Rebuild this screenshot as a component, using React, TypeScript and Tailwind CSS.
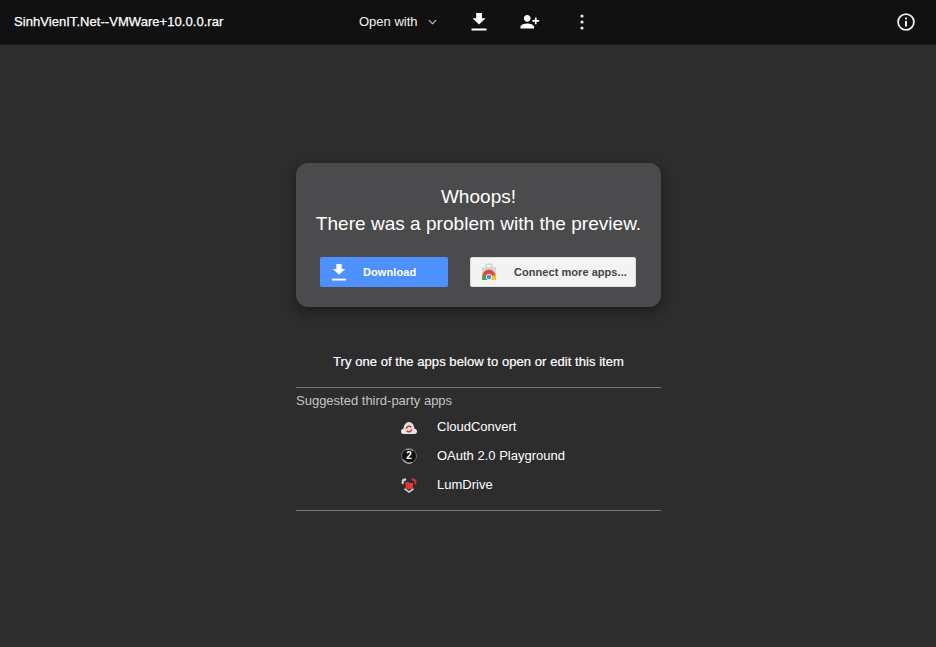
const font = { fontFamily: '"Liberation Sans", Arial, sans-serif' };

function DownloadIcon({ className }: { className?: string }) {
  return (
    <svg viewBox="0 0 16 18" className={className} fill="currentColor">
      <path d="M4.500 0h7v6.500H16L8 14 0 6.500h4.500z" transform="translate(1.500 0) scale(0.82)" />
      <rect x="0.500" y="15.500" width="15" height="2" />
    </svg>
  );
}

function ChromeStore() {
  return (
    <svg viewBox="0 0 16 18" className="w-4 h-[18px]">
      <path d="M1 4h14v13H1z" fill="#d8d8d8" />
      <path d="M5 4V2.500C5 1.500 6 1 8 1s3 .5 3 1.500V4" fill="none" stroke="#bdbdbd" />
      <path d="M1.500 13a6.500 6.500 0 0 1 13 0z" fill="#dd4b3e" />
      <path d="M1 12.500h5l2 4.500H1z" fill="#4fa44a" />
      <path d="M10 12.500h5V17H7z" fill="#f5c431" />
      <circle cx="8" cy="14" r="3" fill="#fff" />
      <circle cx="8" cy="14" r="2.300" fill="#4c8bf5" />
    </svg>
  );
}

function CloudConvert() {
  return (
    <svg viewBox="0 0 16 12" className="w-4 h-3 mt-[2px]">
      <path d="M2.500 12C.8 12 0 11 0 9.500 0 8 1 7 2.500 6.800 2.800 3 5 0 8 0s5.200 3 5.500 6.800C15 7 16 8 16 9.500c0 1.500-.8 2.500-2.500 2.500z" fill="#e4e4e4" />
      <path d="M5.300 6.800a2.800 2.800 0 0 1 5-1.500M10.700 7.200a2.800 2.800 0 0 1-5 1.500" fill="none" stroke="#d6332f" strokeWidth="1.600" />
    </svg>
  );
}

function OAuth() {
  return (
    <svg viewBox="0 0 16 16" className="w-4 h-4">
      <circle cx="8" cy="8" r="7.500" fill="#111111" stroke="#6e6e6e" strokeWidth="1" />
      <path d="M2 11.500a7 7 0 0 0 9 3" fill="none" stroke="#bdbdbd" strokeWidth="1.200" />
      <path d="M5 1.800a7 7 0 0 1 7 1" fill="none" stroke="#a8a8a8" strokeWidth="1" />
      <text x="8" y="11.200" textAnchor="middle" fontSize="10" fontWeight="700" fill="#fff" fontFamily="Liberation Sans">2</text>
    </svg>
  );
}

function LumDrive() {
  return (
    <svg viewBox="0 0 16 16" className="w-4 h-4">
      <path d="M4.500 1 1 2.500.5 6.500l2 1 .5-3 2.500-1.500z" fill="#cfcfcf" />
      <path d="M10.500 1 15 2.500l.5 4-2 1.500V4.500L10.500 3z" fill="#d9302c" />
      <path d="M3 12.500 8 16l5-3.500-1-1.500-4 3-4-3z" fill="#cfcfcf" />
      <path d="M4.500 5h3l1 1h3.500v4.500L10 12H6l-1.500-1.500z" fill="#e53530" />
    </svg>
  );
}

function AppRow({ icon, name }: { icon: React.ReactNode; name: string }) {
  return (
    <div className="flex items-center h-[29px]">
      <div className="w-[36px] flex justify-start">{icon}</div>
      <span className="text-[13px] text-white">{name}</span>
    </div>
  );
}

export default function App() {
  return (
    <div className="w-[936px] h-[647px] bg-[#2d2d2d] overflow-hidden" style={font}>
      <header className="flex items-center h-[45px] bg-[#111111] text-white border-b border-[#1d1d1d]">
        <div className="w-[359px] pl-[14px] text-[13px] tracking-[0.05px] [-webkit-text-stroke:0.25px_white] whitespace-nowrap">SinhVienIT.Net--VMWare+10.0.0.rar</div>
        <div className="flex items-center w-[112px]">
          <span className="text-[13px] text-[#f1f1f1]">Open with</span>
          <svg viewBox="0 0 10 6" className="w-[9px] h-[6px] ml-[10px] mr-[2px]" fill="none" stroke="#cfcfcf" strokeWidth="1.200">
            <path d="M1 1l4 4 4-4" />
          </svg>
        </div>
        <DownloadIcon className="w-4 h-[18px] text-white" />
        <svg viewBox="0 0 24 24" className="w-6 h-6 ml-[31px] text-white" fill="currentColor">
          <path d="M15 12c2.210 0 4-1.790 4-4s-1.790-4-4-4-4 1.790-4 4 1.790 4 4 4zm-9-2V7H4v3H1v2h3v3h2v-3h3v-2H6zm9 4c-2.670 0-8 1.340-8 4v2h16v-2c0-2.660-5.330-4-8-4z" transform="matrix(-0.85 0 0 0.85 22 1.500)" />
        </svg>
        <svg viewBox="0 0 4 16" className="w-1 h-4 ml-[38px] text-[#e8e8e8]" fill="currentColor">
          <circle cx="2" cy="2" r="1.600" />
          <circle cx="2" cy="8" r="1.600" />
          <circle cx="2" cy="14" r="1.600" />
        </svg>
        <svg viewBox="0 0 18 18" className="w-[18px] h-[18px] ml-auto mr-[21px] text-[#eeeeee]" fill="none" stroke="currentColor">
          <circle cx="9" cy="9" r="7.900" strokeWidth="1.800" />
          <rect x="8" y="8" width="2" height="5.500" fill="currentColor" stroke="none" />
          <rect x="8" y="4.500" width="2" height="2" fill="currentColor" stroke="none" />
        </svg>
      </header>

      <main className="ml-[296px] w-[365px] pt-[118px]">
        <div className="h-[144px] rounded-[12px] bg-[#4b4a4c] shadow-[0_5px_14px_rgba(0,0,0,0.4)] pt-[21px]">
          <div className="text-center text-white text-[19px] leading-[26px] tracking-[0.03px] whitespace-nowrap">
            <div>Whoops!</div>
            <div className="pt-[1px]">There was a problem with the preview.</div>
          </div>
          <div className="flex mt-[20px] ml-[24px] gap-[22px]">
            <div className="flex items-center w-[128px] h-[30px] rounded-[2px] bg-[#4d90fe] text-white pl-[11px]">
              <DownloadIcon className="w-[16px] h-[17px]" />
              <span className="ml-[16px] text-[11px] font-bold tracking-[0.1px]">Download</span>
            </div>
            <div className="flex items-center w-[166px] h-[30px] rounded-[2px] bg-[#f3f3f3] border border-[#dcdcdc] pl-[10px]">
              <ChromeStore />
              <span className="ml-[17px] text-[11px] font-bold text-[#444444] tracking-[0.05px] whitespace-nowrap">Connect more apps...</span>
            </div>
          </div>
        </div>

        <div className="mt-[47px] text-center text-[13px] leading-4 tracking-[0.06px] text-white [-webkit-text-stroke:0.2px_white]">
          Try one of the apps below to open or edit this item
        </div>

        <div className="mt-[17px] border-t border-[#777777] pt-[5px]">
          <div className="text-[13px] leading-4 text-[#c4c4c4]">Suggested third-party apps</div>
          <div className="mt-[3px] ml-[105px]">
            <AppRow icon={<CloudConvert />} name="CloudConvert" />
            <AppRow icon={<OAuth />} name="OAuth 2.0 Playground" />
            <AppRow icon={<LumDrive />} name="LumDrive" />
          </div>
        </div>
        <div className="mt-[11px] border-t border-[#777777]" />
      </main>
    </div>
  );
}
